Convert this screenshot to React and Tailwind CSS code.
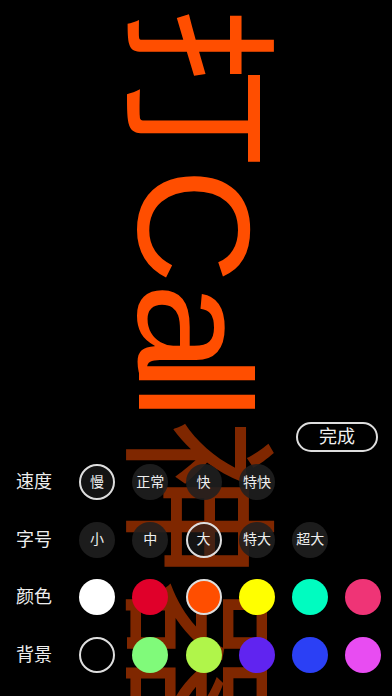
import React from "react";

const FONT = { fontFamily: '"Liberation Sans", "Noto Sans CJK SC", sans-serif' };

const speeds = ["慢", "正常", "快", "特快"];
const sizes = ["小", "中", "大", "特大", "超大"];
const colors = ["#ffffff", "#e0002a", "#ff4e00", "#ffff00", "#00fcc0", "#ef3476"];
const bgs = ["#000000", "#80fa7a", "#b0f54a", "#6024f0", "#2b40f5", "#e84cf2"];

function TextDot({ label, selected }) {
  return (
    <div
      className={
        "w-[36px] h-[36px] rounded-full flex items-center justify-center text-[14px] text-[#eeeeee] shrink-0 " +
        (selected ? "border-2 border-[#dedede] bg-[rgba(32,32,32,0.6)]" : "bg-[rgba(32,32,32,0.88)]")
      }
    >
      {label}
    </div>
  );
}

function ColorDot({ color, selected }) {
  return (
    <div
      className={"w-[36px] h-[36px] rounded-full shrink-0 " + (selected ? "border-2 border-[#dedede]" : "")}
      style={{ backgroundColor: color }}
    />
  );
}

function Row({ label, children }) {
  return (
    <div className="flex items-center h-[36px] pl-[16px]">
      <div className="w-[63px] text-[18px] text-[#eeeeee] leading-none">{label}</div>
      <div className="flex items-center gap-[17.3px]">{children}</div>
    </div>
  );
}

export default function App() {
  return (
    <div className="relative w-[392px] h-[696px] bg-black overflow-hidden" style={FONT}>
      <div className="absolute top-[8px] left-[274px] origin-top-left rotate-90 whitespace-nowrap text-[160px] leading-none text-[#ff4e00]">
        打C<span className="tracking-[-17px]">a</span>
        <span className="tracking-[-7px]">l</span>
        <span className="tracking-[-1px]">l</span>神器
      </div>
      <div className="absolute left-0 right-0 top-[411px] bottom-0 bg-black/50 flex flex-col">
        <div className="flex justify-end pr-[14px] pt-[11px]">
          <div className="w-[82px] h-[30px] rounded-full border-2 border-[#dedede] flex items-center justify-center text-[18px] text-[#f0f0f0]">
            完成
          </div>
        </div>
        <div className="flex flex-col gap-[21.5px] mt-[12px]">
          <Row label="速度">
            {speeds.map((s, i) => (
              <TextDot key={s} label={s} selected={i === 0} />
            ))}
          </Row>
          <Row label="字号">
            {sizes.map((s, i) => (
              <TextDot key={s} label={s} selected={i === 2} />
            ))}
          </Row>
          <Row label="颜色">
            {colors.map((c, i) => (
              <ColorDot key={c} color={c} selected={i === 2} />
            ))}
          </Row>
          <Row label="背景">
            {bgs.map((c, i) => (
              <ColorDot key={c} color={c} selected={i === 0} />
            ))}
          </Row>
        </div>
      </div>
    </div>
  );
}
